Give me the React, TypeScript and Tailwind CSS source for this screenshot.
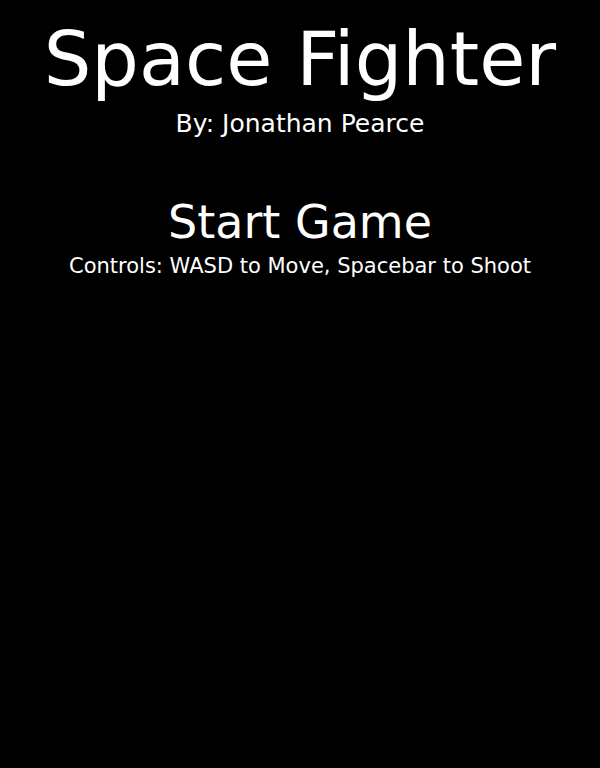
const App = () => {
  return (
    <div
      className="min-h-screen bg-black text-white text-center"
      style={{ fontFamily: '"Century Gothic", Futura, "DejaVu Sans", sans-serif' }}
    >
      <h1 className="pt-[16px] text-[75px] leading-[86px] whitespace-nowrap">Space Fighter</h1>
      <p className="mt-[8px] text-[25px] leading-[28px]">By: Jonathan Pearce</p>

      <button className="mt-[56px] text-[46px] leading-[56px] text-white">
        Start Game
      </button>
      <p className="mt-[3px] text-[21px] leading-[26px] whitespace-nowrap">
        Controls: WASD to Move, Spacebar to Shoot
      </p>
    </div>
  );
};

export default App;
